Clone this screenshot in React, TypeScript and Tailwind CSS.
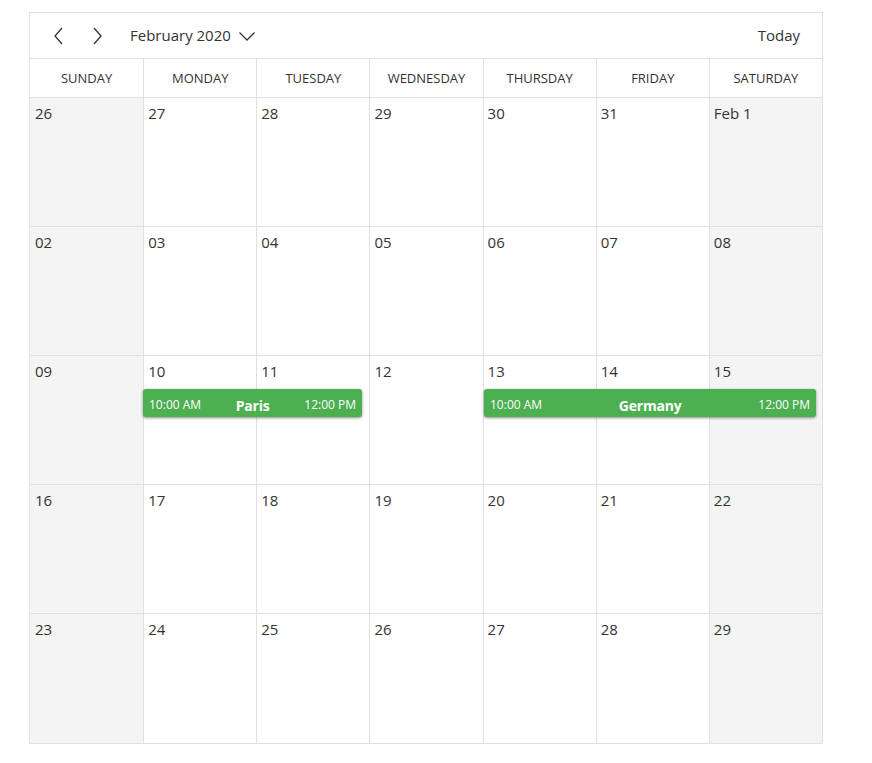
import React from "react";

const days = ["SUNDAY", "MONDAY", "TUESDAY", "WEDNESDAY", "THURSDAY", "FRIDAY", "SATURDAY"];
const weeks = [
  ["26", "27", "28", "29", "30", "31", "Feb 1"],
  ["02", "03", "04", "05", "06", "07", "08"],
  ["09", "10", "11", "12", "13", "14", "15"],
  ["16", "17", "18", "19", "20", "21", "22"],
  ["23", "24", "25", "26", "27", "28", "29"],
];

function Chevron({ dir }: { dir: "left" | "right" | "down" }) {
  if (dir === "down") {
    return (
      <svg width="18" height="18" viewBox="0 0 18 18" fill="none" stroke="#333" strokeWidth="1.3">
        <path d="M1.5 5.5 L9 13 L16.5 5.5" />
      </svg>
    );
  }
  const d = dir === "left" ? "M12 2 L5 10 L12 18" : "M6 2 L13 10 L6 18";
  return (
    <svg width="18" height="20" viewBox="0 0 18 20" fill="none" stroke="#333" strokeWidth="1.3">
      <path d={d} />
    </svg>
  );
}

function Event({ left, width, title }: { left: number; width: number; title: string }) {
  return (
    <div
      className="absolute top-[33px] h-[28px] rounded-[3px] bg-[#4caf50] text-white flex items-center justify-between px-[6px] pt-[4px] shadow-[0_1px_3px_rgba(0,0,0,0.45)]"
      style={{ left, width }}
    >
      <span className="text-[12px]">10:00 AM</span>
      <span className="text-[14px] font-bold tracking-[-0.2px]">{title}</span>
      <span className="text-[12px]">12:00 PM</span>
    </div>
  );
}

export default function App() {
  return (
    <div className="min-h-screen bg-white pl-[29px] pt-[12px] text-[#333]" style={{ fontFamily: '"Open Sans", "Noto Sans", sans-serif' }}>
      <div className="w-[794px] border border-[#e0e0e0] flex flex-col">
        <div className="h-[46px] flex items-center border-b border-[#e0e0e0] pl-[20px] pr-[22px]">
          <div className="flex items-center gap-[20px]">
            <Chevron dir="left" />
            <Chevron dir="right" />
          </div>
          <div className="ml-[24px] flex items-center gap-[7px] text-[15px]">
            <span>February 2020</span>
            <Chevron dir="down" />
          </div>
          <div className="ml-auto text-[15px]">Today</div>
        </div>
        <div className="grid grid-cols-7 h-[39px] border-b border-[#e0e0e0]">
          {days.map((d, i) => (
            <div
              key={d}
              className={`flex items-center justify-center pt-[2px] text-[13px] text-[#333] ${i > 0 ? "border-l border-[#e0e0e0]" : ""}`}
            >
              {d}
            </div>
          ))}
        </div>
        {weeks.map((w, wi) => (
          <div key={wi} className={`relative grid grid-cols-7 h-[129px] ${wi < 4 ? "border-b border-[#e0e0e0]" : ""}`}>
            {w.map((n, i) => (
              <div
                key={i}
                className={`pt-[4px] text-[15px] ${i === 0 ? "pl-[5px]" : "pl-[4px]"} ${i === 0 || i === 6 ? "bg-[#f4f4f4]" : "bg-white"} ${
                  i > 0 ? "border-l border-[#e0e0e0]" : ""
                }`}
              >
                {n}
              </div>
            ))}
            {wi === 2 && (
              <>
                <Event left={113} width={219} title="Paris" />
                <Event left={454} width={332} title="Germany" />
              </>
            )}
          </div>
        ))}
      </div>
    </div>
  );
}
